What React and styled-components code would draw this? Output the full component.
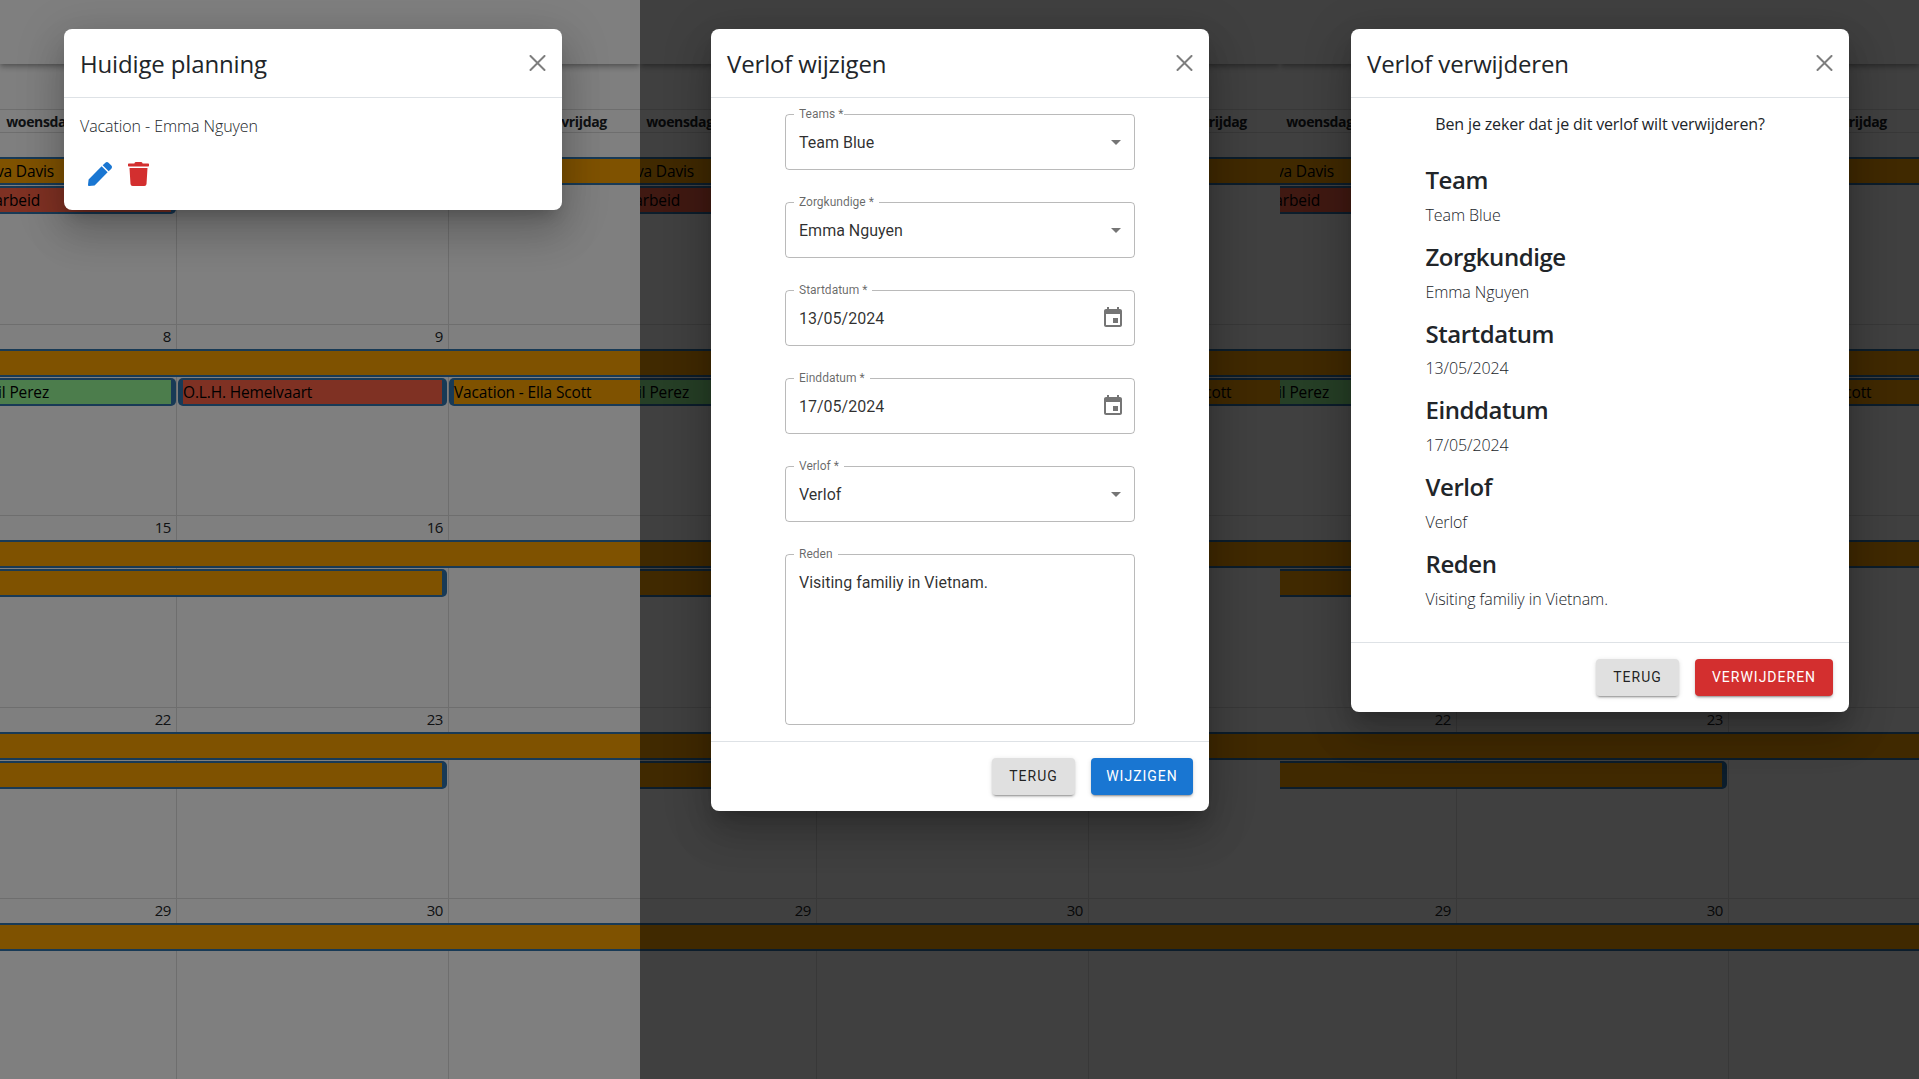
import React from 'react';
import styled, { createGlobalStyle } from 'styled-components';
import { FaPen, FaTrash } from 'react-icons/fa';

const SANS = '"Open Sans", "Noto Sans", sans-serif';
const ROBOTO = 'Roboto, "Liberation Sans", sans-serif';

const Global = createGlobalStyle`
  html, body { margin: 0; padding: 0; overflow: hidden; background: #fff; }
  * { box-sizing: border-box; }
`;

const Screen = styled.div`
  display: flex;
  width: 1919px;
  height: 1079px;
  overflow: hidden;
  font-family: ${SANS};
  color: #212529;
`;

const Panel = styled.section`
  position: relative;
  flex: 0 0 ${p => p.$width}px;
  height: 100%;
  overflow: hidden;
  background: #fff;
`;

const AppBar = styled.header`
  height: 64px;
  background: #fff;
  box-shadow: 0 2px 4px -1px rgba(0,0,0,.2), 0 4px 5px 0 rgba(0,0,0,.14), 0 1px 10px 0 rgba(0,0,0,.12);
`;

const Calendar = styled.div`
  width: 816px;
  margin: 45px 0 0 -96px;
`;

const HeadRow = styled.div`
  display: grid;
  grid-template-columns: repeat(3, 272px);
  height: 23px;
  border-top: 1px solid #ddd;
`;

const HeadCell = styled.div`
  text-align: center;
  font-weight: 700;
  font-size: 14px;
  letter-spacing: -0.35px;
  line-height: 24px;
  color: #212529;
`;

const Week = styled.div`
  display: grid;
  grid-template-columns: repeat(3, 272px);
  grid-auto-rows: min-content;
  height: 191.5px;
  border-top: 1px solid #ddd;
  background-image: linear-gradient(to right, #ddd 1px, transparent 1px);
  background-size: 272px 100%;
`;

const DateCell = styled.div`
  grid-row: 1;
  height: 24px;
  padding-right: 5px;
  text-align: right;
  font-size: 15px;
  line-height: 23px;
  letter-spacing: -0.4px;
`;

const Bar = styled.div`
  grid-row: ${p => p.$row};
  grid-column: ${p => p.$from} / ${p => p.$to + 1};
  margin: 0 ${p => p.$mr}px 1px ${p => p.$ml}px;
  min-width: 0;
  height: 28px;
  padding: 2px 5px;
  background: #3174ad;
  border-radius: 5px;
  white-space: nowrap;
`;

const BarFill = styled.div`
  display: flex;
  height: 24px;
  background: ${p => p.$color};
  color: #000;
  font-size: 15.5px;
  line-height: 24px;
  letter-spacing: -0.15px;
`;

const BarText = styled.span`
  display: flex;
  justify-content: ${p => (p.$endAt ? 'flex-end' : 'flex-start')};
  width: ${p => (p.$endAt ? `${p.$endAt}px` : 'auto')};
`;

const Backdrop = styled.div`
  position: absolute;
  inset: 0;
  display: flex;
  align-items: flex-start;
  padding: 29px 0 0 ${p => p.$left}px;
  background: rgba(0, 0, 0, ${p => p.$alpha});
`;

const Dialog = styled.div`
  width: 498px;
  background: #fff;
  border-radius: 8px;
  box-shadow: 0 11px 15px -7px rgba(0,0,0,.2), 0 24px 38px 3px rgba(0,0,0,.14), 0 9px 46px 8px rgba(0,0,0,.12);
`;

const DialogHead = styled.div`
  display: flex;
  align-items: center;
  justify-content: space-between;
  height: 69px;
  padding: 0 16px;
  border-bottom: 1px solid #dee2e6;
`;

const Title = styled.h5`
  margin: 0;
  padding-top: 2px;
  font-size: 24px;
  font-weight: 500;
  letter-spacing: -0.15px;
  line-height: 36px;
  color: #212529;
`;

const CloseIcon = styled.svg`
  display: block;
  width: 17px;
  height: 16px;
  fill: #000;
  opacity: .5;
`;

const Body = styled.div`
  padding: 16px;
`;

const Plain = styled.p`
  margin: 0 0 16px;
  font-size: 16px;
  font-weight: 300;
  line-height: 24px;
  letter-spacing: -0.08px;
  color: #212529;
`;

const IconRow = styled.div`
  display: flex;
`;

const IconButton = styled.button`
  display: flex;
  justify-content: center;
  width: ${p => p.$w}px;
  padding: 8px 0;
  border: 0;
  background: none;
  color: ${p => p.$color};
  svg { display: block; width: ${p => p.$w - 16}px; height: 24px; }
`;

const Form = styled.div`
  display: flex;
  flex-direction: column;
  align-items: center;
  gap: 32px;
  padding: 16px;
`;

const Field = styled.div`
  position: relative;
  display: flex;
  align-items: ${p => (p.$tall ? 'flex-start' : 'center')};
  justify-content: space-between;
  width: 350px;
  height: ${p => (p.$tall ? 171 : 56)}px;
  padding: ${p => (p.$tall ? '15.5px 13px 0' : `0 ${p.$pr}px 0 13px`)};
  border: 1px solid rgba(0,0,0,.27);
  border-radius: 4px;
  font-family: ${ROBOTO};
  font-size: 16px;
  line-height: 23px;
  color: rgba(0,0,0,.82);
`;

const FieldLabel = styled.label`
  position: absolute;
  top: -7px;
  left: 8px;
  padding: 0 ${p => p.$pr}px 0 5px;
  background: #fff;
  font-size: 12px;
  line-height: 12px;
  color: rgba(0,0,0,.6);
`;

const FieldIcon = styled.svg`
  display: block;
  flex: none;
  width: 24px;
  height: 24px;
  fill: rgba(0,0,0,.54);
`;

const Footer = styled.div`
  display: flex;
  justify-content: flex-end;
  gap: 16px;
  padding: 16px;
  border-top: 1px solid #dee2e6;
`;

const ActionButton = styled.button`
  width: ${p => p.$w}px;
  height: 37px;
  padding: 0 0 1px;
  border: 0;
  border-radius: 4px;
  background: ${p => p.$bg};
  color: ${p => p.$fg};
  font-family: ${ROBOTO};
  font-size: 14px;
  font-weight: 400;
  letter-spacing: 1px;
  text-transform: uppercase;
  box-shadow: 0 3px 1px -2px rgba(0,0,0,.2), 0 2px 2px 0 rgba(0,0,0,.14), 0 1px 5px 0 rgba(0,0,0,.12);
`;

const Question = styled.p`
  margin: 0 0 16px;
  text-align: center;
  font-size: 16px;
  line-height: 20px;
  letter-spacing: -0.15px;
  color: #212529;
`;

const Details = styled.div`
  margin-bottom: -1.2px;
  padding: 16px 0 0 58.5px;
`;

const DetailTitle = styled.h4`
  margin: 0 0 8px;
  font-size: 24px;
  font-weight: 550;
  line-height: 28.8px;
  letter-spacing: -0.45px;
  color: #212529;
`;

const ORANGE = '#ffa500';
const RED = '#ff6347';
const GREEN = '#98fb98';
const FAR = -300;

const weeks = [
  { dates: [1, 2, 3], bars: [
    { row: 2, from: 1, to: 3, ml: FAR, mr: -40, color: ORANGE, text: 'Vacation - Eva Davis', end: 445 },
    { row: 3, from: 1, to: 1, ml: FAR, mr: 0, color: RED, text: 'Dag van de arbeid', end: 431 },
  ] },
  { dates: [8, 9, 10], bars: [
    { row: 2, from: 1, to: 3, ml: FAR, mr: -40, color: ORANGE },
    { row: 3, from: 1, to: 1, ml: FAR, mr: 0, color: GREEN, text: 'Ziekte - Emil Perez', end: 440 },
    { row: 3, from: 2, to: 2, ml: 2, mr: 1, color: RED, text: 'O.L.H. Hemelvaart' },
    { row: 3, from: 3, to: 3, ml: 1, mr: -40, color: ORANGE, text: 'Vacation - Ella Scott' },
  ] },
  { dates: [15, 16, 17], bars: [
    { row: 2, from: 1, to: 3, ml: FAR, mr: -40, color: ORANGE },
    { row: 3, from: 1, to: 2, ml: FAR, mr: 1, color: ORANGE },
  ] },
  { dates: [22, 23, 24], bars: [
    { row: 2, from: 1, to: 3, ml: FAR, mr: -40, color: ORANGE },
    { row: 3, from: 1, to: 2, ml: FAR, mr: 1, color: ORANGE },
  ] },
  { dates: [29, 30, 31], bars: [
    { row: 2, from: 1, to: 3, ml: FAR, mr: -40, color: ORANGE },
  ] },
];

const CalendarView = () => (
  <>
    <AppBar />
    <Calendar>
      <HeadRow>
        <HeadCell>woensdag</HeadCell>
        <HeadCell>donderdag</HeadCell>
        <HeadCell>vrijdag</HeadCell>
      </HeadRow>
      {weeks.map(w => (
        <Week key={w.dates[0]}>
          {w.dates.map(d => <DateCell key={d}>{d}</DateCell>)}
          {w.bars.map((b, i) => (
            <Bar key={i} $row={b.row} $from={b.from} $to={b.to} $ml={b.ml} $mr={b.mr}>
              <BarFill $color={b.color}>
                {b.text && <BarText $endAt={b.end}>{b.text}</BarText>}
              </BarFill>
            </Bar>
          ))}
        </Week>
      ))}
    </Calendar>
  </>
);

const Head = ({ title }) => (
  <DialogHead>
    <Title>{title}</Title>
    <CloseIcon viewBox="0 0 16 16" aria-label="Sluiten">
      <path d="M.293.293a1 1 0 0 1 1.414 0L8 6.586 14.293.293a1 1 0 1 1 1.414 1.414L9.414 8l6.293 6.293a1 1 0 0 1-1.414 1.414L8 9.414l-6.293 6.293a1 1 0 0 1-1.414-1.414L6.586 8 .293 1.707a1 1 0 0 1 0-1.414z" />
    </CloseIcon>
  </DialogHead>
);

const ArrowIcon = () => (
  <FieldIcon viewBox="0 0 24 24"><path d="M7 10l5 5 5-5z" /></FieldIcon>
);

const DateIcon = () => (
  <FieldIcon viewBox="0 0 24 24">
    <path d="M17 12h-5v5h5v-5zM16 1v2H8V1H6v2H5c-1.11 0-1.99.9-1.99 2L3 19c0 1.1.89 2 2 2h14c1.1 0 2-.9 2-2V5c0-1.1-.9-2-2-2h-1V1h-2zm3 18H5V8h14v11z" />
  </FieldIcon>
);

const fields = [
  { label: 'Teams *', value: 'Team Blue', kind: 'select', notch: 1 },
  { label: 'Zorgkundige *', value: 'Emma Nguyen', kind: 'select', notch: 5 },
  { label: 'Startdatum *', value: '13/05/2024', kind: 'date', notch: 5 },
  { label: 'Einddatum *', value: '17/05/2024', kind: 'date', notch: 5 },
  { label: 'Verlof *', value: 'Verlof', kind: 'select', notch: 5 },
];

const details = [
  ['Team', 'Team Blue'],
  ['Zorgkundige', 'Emma Nguyen'],
  ['Startdatum', '13/05/2024'],
  ['Einddatum', '17/05/2024'],
  ['Verlof', 'Verlof'],
  ['Reden', 'Visiting familiy in Vietnam.'],
];

export default function App() {
  return (
    <>
      <Global />
      <Screen>
        <Panel $width={640}>
          <CalendarView />
          <Backdrop $left={64} $alpha={0.5}>
            <Dialog>
              <Head title="Huidige planning" />
              <Body>
                <Plain>Vacation - Emma Nguyen</Plain>
                <IconRow>
                  <IconButton $w={40} $color="#1976d2"><FaPen /></IconButton>
                  <IconButton $w={37} $color="#d32f2f"><FaTrash /></IconButton>
                </IconRow>
              </Body>
            </Dialog>
          </Backdrop>
        </Panel>

        <Panel $width={640}>
          <CalendarView />
          <Backdrop $left={71} $alpha={0.75}>
            <Dialog>
              <Head title="Verlof wijzigen" />
              <Form>
                {fields.map(f => (
                  <Field key={f.label} $pr={f.kind === 'date' ? 9 : 6}>
                    <FieldLabel $pr={f.notch}>{f.label}</FieldLabel>
                    {f.value}
                    {f.kind === 'date' ? <DateIcon /> : <ArrowIcon />}
                  </Field>
                ))}
                <Field $tall>
                  <FieldLabel $pr={5}>Reden</FieldLabel>
                  Visiting familiy in Vietnam.
                </Field>
              </Form>
              <Footer>
                <ActionButton $w={83} $bg="#e0e0e0" $fg="rgba(0,0,0,.87)">Terug</ActionButton>
                <ActionButton $w={102} $bg="#1976d2" $fg="#fff">Wijzigen</ActionButton>
              </Footer>
            </Dialog>
          </Backdrop>
        </Panel>

        <Panel $width={639}>
          <CalendarView />
          <Backdrop $left={71} $alpha={0.75}>
            <Dialog>
              <Head title="Verlof verwijderen" />
              <Body>
                <Question>Ben je zeker dat je dit verlof wilt verwijderen?</Question>
                <Details>
                  {details.map(([k, v]) => (
                    <React.Fragment key={k}>
                      <DetailTitle>{k}</DetailTitle>
                      <Plain>{v}</Plain>
                    </React.Fragment>
                  ))}
                </Details>
              </Body>
              <Footer>
                <ActionButton $w={83} $bg="#e0e0e0" $fg="rgba(0,0,0,.87)">Terug</ActionButton>
                <ActionButton $w={138} $bg="#d32f2f" $fg="#fff">Verwijderen</ActionButton>
              </Footer>
            </Dialog>
          </Backdrop>
        </Panel>
      </Screen>
    </>
  );
}
